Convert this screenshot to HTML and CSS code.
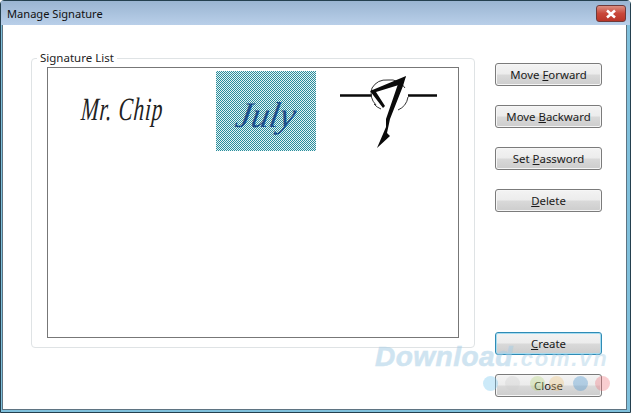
FILE: index.html
```html
<!DOCTYPE html>
<html lang="en">
<head>
<meta charset="utf-8">
<title>Manage Signature</title>
<link rel="stylesheet" href="styles.css">
</head>
<body>
<div class="window">
  <header class="titlebar">
    <span class="title">Manage Signature</span>
    <button class="close-x" aria-label="Close">
      <svg width="14" height="10" viewBox="0 0 14 10"><path d="M3 1.5 11 8.5M11 1.5 3 8.5" stroke="#fff" stroke-width="2.6" fill="none"/></svg>
    </button>
  </header>
  <main class="content">
    <section class="group">
      <span class="legend">Signature List</span>
      <div class="list">
        <div class="sig sig-first"><span class="chip">Mr. Chip</span></div>
        <div class="sig sig-selected"><span class="july">July</span></div>
        <div class="sig">
          <svg class="mark" width="100" height="80" viewBox="338 71 100 80">
            <path d="M340 95.5H372M408 95.5H437" stroke="#0a0a0a" stroke-width="2.4" fill="none"/>
            <path d="M376 105A17 17 0 0 1 372 88A17 17 0 0 1 388 80A17 17 0 0 1 405 88M408 97A17 17 0 0 1 398 110M374 104A17 17 0 0 0 381 109" stroke="#333" stroke-width="1" fill="none"/>
            <path d="M406 76 370 91 383 108 385 106 376 92 402 84Z" fill="#0a0a0a"/>
            <path d="M406 76 398 84 386 119 386 127 377 148 390 136 387 133 390 119 403 86Z" fill="#0a0a0a"/>
          </svg>
        </div>
      </div>
    </section>
    <aside class="actions">
      <div class="action-group">
        <button class="btn">Move <u>F</u>orward</button>
        <button class="btn">Move <u>B</u>ackward</button>
        <button class="btn">Set <u>P</u>assword</button>
        <button class="btn"><u>D</u>elete</button>
      </div>
      <div class="action-group">
        <button class="btn btn-default"><u>C</u>reate</button>
        <button class="btn">Close</button>
      </div>
    </aside>
  </main>
  <div class="watermark">
    <span class="wm-text">Download<small class="wm-small">.com.vn</small></span>
    <div class="wm-dots">
      <i class="dot d1"></i><i class="dot d2"></i><i class="dot d3"></i><i class="dot d4"></i><i class="dot d5"></i><i class="dot d6"></i>
    </div>
  </div>
</div>
</body>
</html>
```
FILE: styles.css
```css
* { box-sizing: border-box; }
html, body { margin: 0; padding: 0; }
body {
  width: 631px;
  height: 413px;
  overflow: hidden;
  font-family: "Noto Sans", "Open Sans", sans-serif;
  font-size: 11.4px;
  color: #1a1a1a;
}
.window {
  position: relative;
  width: 631px;
  height: 413px;
  display: flex;
  flex-direction: column;
  background: #7fc0dc;
  border: 1px solid #24404f;
  border-radius: 4px 4px 0 0;
  padding: 0 3px 2px 1px;
}
.titlebar {
  height: 24px;
  flex: none;
  margin: 0 -3px 0 -1px;
  padding: 0 4px 0 6px;
  display: flex;
  align-items: center;
  justify-content: space-between;
  background: linear-gradient(#9ab5d2, #b9cfe9);
}
.title {
  font-size: 11.1px;
  color: #111;
}
.close-x {
  width: 30px;
  height: 17px;
  margin-top: 1px;
  padding: 0;
  display: flex;
  align-items: center;
  justify-content: center;
  background: linear-gradient(#dc8f82, #c9483a 50%, #b93528);
  border: 1px solid #6f3a3a;
  border-radius: 3px;
}
.content {
  flex: 1;
  display: flex;
  background: #fff;
  border: 1px solid #5f7482;
  border-width: 0 1px 1px 1px;
  padding: 33px 24px 12px 28px;
}
.group {
  position: relative;
  width: 444px;
  height: 290px;
  flex: none;
  padding: 8px 0 0 15px;
  border: 1px solid #dfe3e5;
  border-radius: 4px;
}
.legend {
  position: absolute;
  left: 5px;
  top: -9px;
  padding: 0 3px;
  background: #fff;
  font-size: 11.5px;
  line-height: 15px;
  color: #222;
}
.list {
  width: 412px;
  height: 271px;
  border: 1px solid #777;
  background: #fff;
  padding: 3px 0 0 24px;
  display: flex;
  align-items: flex-start;
  gap: 22px;
}
.sig {
  width: 100px;
  height: 80px;
  flex: none;
  display: flex;
  align-items: center;
  justify-content: center;
}
.sig-first { margin-right: 22px; }
.sig-selected {
  background: repeating-conic-gradient(#2a8c9c 0 25%, #e6f5f5 0 50%) 0 0 / 2px 2px;
}
.chip {
  font-family: "Liberation Serif", serif;
  font-style: italic;
  font-size: 29px;
  line-height: 34px;
  letter-spacing: 1.2px;
  color: #222;
  white-space: nowrap;
  transform: scale(.73, 1.12) skewX(-6deg);
  position: relative;
  top: -2px;
}
.july {
  font-family: "Liberation Serif", serif;
  font-style: italic;
  font-size: 36px;
  line-height: 40px;
  color: #1d4f8a;
  transform: skewX(-10deg);
  position: relative;
  top: 4px;
}
.mark { display: block; }
.actions {
  width: 107px;
  margin-left: 20px;
  padding-top: 5px;
  display: flex;
  flex-direction: column;
  justify-content: space-between;
}
.action-group {
  display: flex;
  flex-direction: column;
  gap: 19px;
}
.btn {
  width: 107px;
  height: 23px;
  padding: 0;
  font-family: inherit;
  font-size: 11.4px;
  color: #1a1a1a;
  background: linear-gradient(#f3f3f3, #ececec 48%, #d9d9d9 52%, #cdcdcd);
  border: 1px solid #7b7b7b;
  border-radius: 3px;
  box-shadow: inset 0 0 0 1px #f6f6f6;
}
.btn-default {
  border-color: #2f8bb5;
  box-shadow: inset 0 0 0 1px #a6dcf0;
}
.watermark {
  position: absolute;
  left: 0;
  top: 0;
  width: 100%;
  height: 100%;
  pointer-events: none;
}
.wm-text {
  position: absolute;
  left: 374px;
  top: 340px;
  font-family: "Liberation Sans", sans-serif;
  font-weight: 700;
  font-style: italic;
  font-size: 28px;
  line-height: 32px;
  letter-spacing: .5px;
  color: #a9cfe6;
  -webkit-text-stroke: .6px #a9cfe6;
  opacity: .55;
  white-space: nowrap;
}
.wm-small {
  font-size: 22px;
  letter-spacing: 1.8px;
  -webkit-text-stroke: 0;
  opacity: .8;
}
.wm-dots {
  position: absolute;
  left: 482px;
  top: 375px;
  width: 130px;
  height: 16px;
}
.dot {
  position: absolute;
  top: 0;
  width: 15px;
  height: 15px;
  border-radius: 50%;
  opacity: .35;
}
.d1 { left: 0; background: #6cc4ee; }
.d2 { left: 22px; background: #cfcfcf; }
.d3 { left: 47px; background: #b6d77a; }
.d4 { left: 66px; background: #f2c67a; }
.d5 { left: 90px; background: #3f8fcf; }
.d6 { left: 112px; background: #ef6f78; }
```
